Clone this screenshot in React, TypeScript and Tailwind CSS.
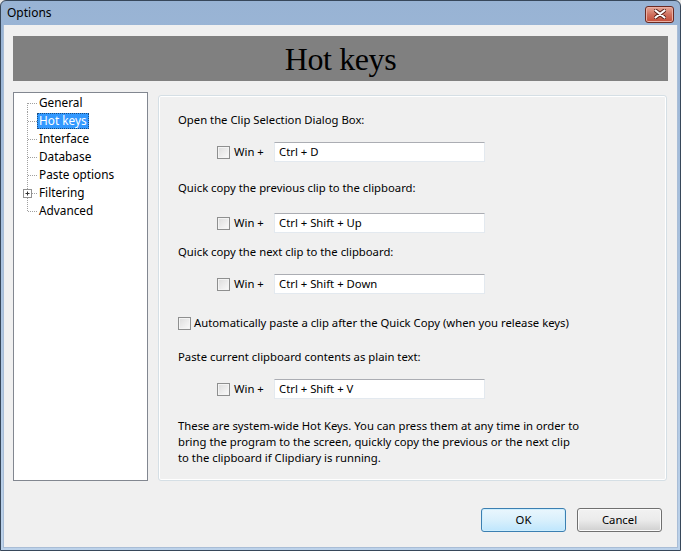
import { ReactNode } from "react";

const ui = { fontFamily: '"Noto Sans", "Liberation Sans", sans-serif' };

const treeItems = [
  { label: "General" },
  { label: "Hot keys", selected: true },
  { label: "Interface" },
  { label: "Database" },
  { label: "Paste options" },
  { label: "Filtering", expandable: true },
  { label: "Advanced" },
];

// dotted connector for a tree row (23x18)
const Connector = ({ first, last, plus }: { first?: boolean; last?: boolean; plus?: boolean }) => (
  <svg width="23" height="18" className="shrink-0">
    <line
      x1="13.5"
      y1={first ? 9 : 0}
      x2="13.5"
      y2={last ? 9 : 18}
      stroke="#a0a0a0"
      strokeDasharray="1 1"
    />
    <line x1="14" y1="9.5" x2="23" y2="9.5" stroke="#a0a0a0" strokeDasharray="1 1" />
    {plus && (
      <g>
        <rect x="9.5" y="5.5" width="8" height="8" fill="#fff" stroke="#919191" />
        <line x1="11.5" y1="9.5" x2="15.5" y2="9.5" stroke="#333" />
        <line x1="13.5" y1="7.5" x2="13.5" y2="11.5" stroke="#333" />
      </g>
    )}
  </svg>
);

const Checkbox = () => (
  <span className="inline-block w-[13px] h-[13px] border border-[#8e8f8f] bg-gradient-to-br from-[#dcdcdc] to-[#fbfbfb] shadow-[inset_0_0_0_1px_#f4f4f4] shrink-0" />
);

const HotKeyRow = ({ value, className }: { value: string; className: string }) => (
  <div className={`flex items-center h-[20px] ${className}`}>
    <div className="ml-[39px] w-[57px] flex items-center gap-[4px]">
      <Checkbox />
      <span className="text-[11.3px] text-black">Win +</span>
    </div>
    <div className="w-[211px] h-[20px] bg-white border border-[#e3e9ef] border-t-[#abadb3] flex items-center pl-[4px] text-[11.3px] text-black">
      {value}
    </div>
  </div>
);

const Label = ({ children, className }: { children: ReactNode; className: string }) => (
  <div className={`h-[16px] leading-[16px] text-[11.3px] text-black ${className}`}>{children}</div>
);

export default function App() {
  return (
    <div className="w-[681px] h-[551px] bg-[#e6e6e6]" style={ui}>
      <div className="w-[681px] h-[551px] flex flex-col border border-[#37475a] rounded-t-[6px] bg-gradient-to-b from-[#98b3d4] to-[#bcd2ea] overflow-hidden">
        {/* Title bar */}
        <div className="h-[24px] flex items-center justify-between pl-[6px] pr-[6px] shrink-0">
          <span className="text-[12px] text-black">Options</span>
          <div className="w-[29px] h-[17px] mt-[2px] rounded-[3px] border border-[#6b2a22] bg-gradient-to-b from-[#e4a899] via-[#d0705e] to-[#c24a35] shadow-[inset_0_0_0_1px_#eab0a4] flex items-center justify-center">
            <svg width="12" height="10" viewBox="0 0 12 10">
              <path d="M1.5 1.5 L10.5 8.5 M10.5 1.5 L1.5 8.5" stroke="#5a2018" strokeWidth="4" strokeLinecap="round" />
              <path d="M1.5 1.5 L10.5 8.5 M10.5 1.5 L1.5 8.5" stroke="#fff" strokeWidth="2.2" strokeLinecap="round" />
            </svg>
          </div>
        </div>

        {/* Client area */}
        <div className="flex-1 mx-[2px] mb-[2px] bg-[#f0f0f0] border border-[#a9bdd6] border-t-0 flex flex-col pt-[11px] pl-[9px] pr-[9px]">
          <div className="h-[45px] bg-[#808080] flex items-center justify-center">
            <span
              className="text-[32px] leading-none text-black tracking-[-0.4px]"
              style={{ fontFamily: '"Liberation Serif", "Times New Roman", serif' }}
            >
              Hot keys
            </span>
          </div>

          <div className="flex mt-[11px] gap-[10px]">
            {/* Tree */}
            <div className="w-[135px] h-[389px] bg-white border border-[#828790] pt-[1px] shrink-0">
              {treeItems.map((item, i) => (
                <div key={item.label} className="h-[18px] flex items-center">
                  <Connector first={i === 0} last={i === treeItems.length - 1} plus={item.expandable} />
                  <span
                    className={
                      item.selected
                        ? "h-[16px] leading-[15px] px-[2px] bg-[#3399ff] text-white text-[11.8px] outline outline-1 outline-dotted outline-[#1a4d80] -outline-offset-1"
                        : "h-[16px] leading-[15px] px-[2px] text-black text-[11.8px]"
                    }
                  >
                    {item.label}
                  </span>
                </div>
              ))}
            </div>

            {/* Hot keys page */}
            <div className="mt-[3px] w-[509px] h-[386px] border border-[#d5dfe5] rounded-[3px] shadow-[inset_0_0_0_1px_#ffffff] pl-[19px] pt-[16px]">
              <Label className="">Open the Clip Selection Dialog Box:</Label>
              <HotKeyRow value="Ctrl + D" className="mt-[14px]" />

              <Label className="mt-[18px]">Quick copy the previous clip to the clipboard:</Label>
              <HotKeyRow value="Ctrl + Shift + Up" className="mt-[17px]" />

              <Label className="mt-[11px]">Quick copy the next clip to the clipboard:</Label>
              <HotKeyRow value="Ctrl + Shift + Down" className="mt-[14px]" />

              <div className="mt-[21px] h-[16px] flex items-center gap-[3px]">
                <Checkbox />
                <span className="text-[11.3px] text-black">
                  Automatically paste a clip after the Quick Copy (when you release keys)
                </span>
              </div>

              <Label className="mt-[18px]">Paste current clipboard contents as plain text:</Label>
              <HotKeyRow value="Ctrl + Shift + V" className="mt-[14px]" />

              <p className="mt-[19px] text-[11.3px] leading-[16px] text-black">
                These are system-wide Hot Keys. You can press them at any time in order to
                <br />
                bring the program to the screen, quickly copy the previous or the next clip
                <br />
                to the clipboard if Clipdiary is running.
              </p>
            </div>
          </div>

          {/* Buttons */}
          <div className="mt-[27px] flex justify-end gap-[11px] pr-[6px]">
            <button className="w-[85px] h-[24px] rounded-[3px] border border-[#3c7fb1] bg-gradient-to-b from-[#eaf6fd] via-[#d9f0fc] to-[#bee6fd] shadow-[inset_0_0_0_1px_#cdeefe] text-[11.3px] text-black">
              OK
            </button>
            <button className="w-[85px] h-[24px] rounded-[3px] border border-[#707070] bg-gradient-to-b from-[#f2f2f2] via-[#ebebeb] to-[#cfcfcf] shadow-[inset_0_0_0_1px_#fbfbfb] text-[11.3px] text-black">
              Cancel
            </button>
          </div>
        </div>
      </div>
    </div>
  );
}
